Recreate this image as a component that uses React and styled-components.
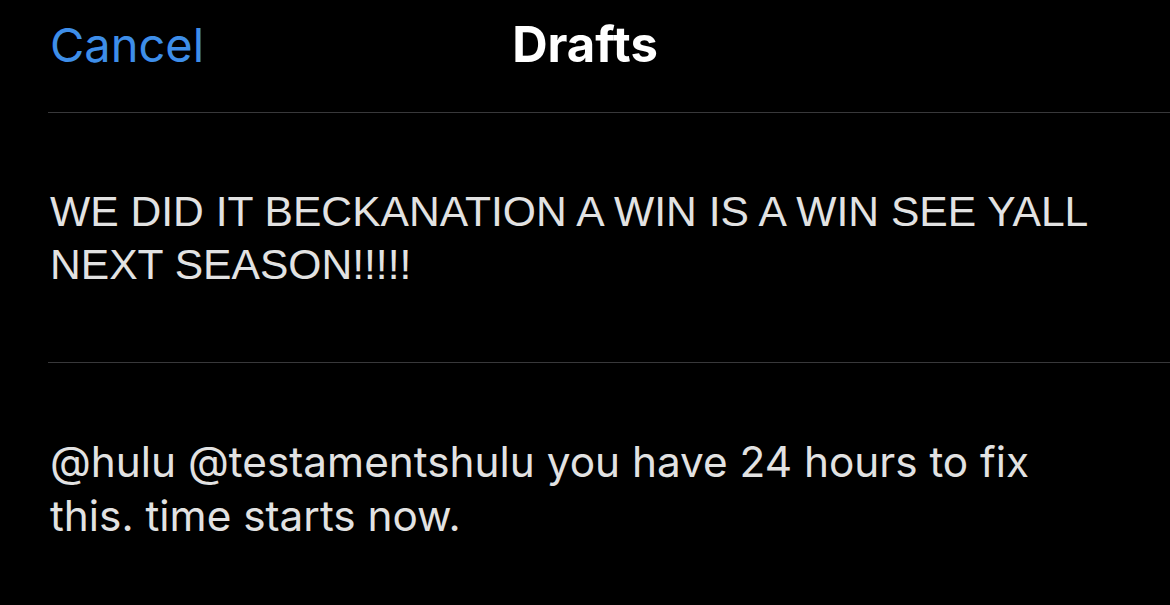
import React from 'react';
import styled, { createGlobalStyle } from 'styled-components';

const GlobalStyle = createGlobalStyle`
  html, body {
    margin: 0;
    padding: 0;
    background: #000;
  }
  #root {
    min-height: 100vh;
    background: #000;
  }
`;

const drafts = [
  {
    id: 1,
    plain: true,
    text: 'WE DID IT BECKANATION A WIN IS A WIN SEE YALL NEXT SEASON!!!!!',
  },
  {
    id: 2,
    plain: false,
    text: '@hulu @testamentshulu you have 24 hours to fix this. time starts now.',
  },
];

const App = () => {
  return (
    <Screen>
      <GlobalStyle />
      <Header>
        <CancelButton type="button">Cancel</CancelButton>
        <Title>Drafts</Title>
        <span />
      </Header>
      <List>
        {drafts.map(draft => (
          <DraftRow key={draft.id}>
            <DraftText $plain={draft.plain}>{draft.text}</DraftText>
          </DraftRow>
        ))}
      </List>
    </Screen>
  );
};

export default App;

//styling
const Screen = styled.div`
  width: 1170px;
  height: 605px;
  overflow: hidden;
  background: #000;
  display: flex;
  flex-direction: column;
`;

const Header = styled.header`
  display: grid;
  grid-template-columns: 1fr auto 1fr;
  align-items: start;
  padding: 15px 0 37px;
  margin-left: 48px;
  border-bottom: 1px solid #38383a;
`;

const CancelButton = styled.button`
  justify-self: start;
  background: none;
  border: none;
  padding: 0 0 0 2px;
  margin: 0;
  font-family: Inter, 'Noto Sans', sans-serif;
  font-size: 47px;
  line-height: 60px;
  color: #3e8ee9;
  cursor: pointer;
`;

const Title = styled.h1`
  margin: 0 0 0 -48px;
  font-family: Inter, 'Noto Sans', sans-serif;
  font-size: 49px;
  line-height: 60px;
  font-weight: 700;
  color: #fff;
`;

const List = styled.div`
  display: flex;
  flex-direction: column;
`;

const DraftRow = styled.div`
  margin-left: 48px;
  padding: 72px 0 71px 2px;
  border-bottom: 1px solid #38383a;
  &:last-child {
    border-bottom: none;
  }
`;

const DraftText = styled.p`
  margin: 0;
  max-width: ${p => (p.$plain ? '1080px' : '1045px')};
  color: #e2e2e2;
  font-family: ${p => (p.$plain ? "'Liberation Sans', Arial, sans-serif" : "Inter, 'Noto Sans', sans-serif")};
  font-size: ${p => (p.$plain ? '42.6px' : '42.3px')};
  line-height: ${p => (p.$plain ? '53px' : '54px')};
`;
